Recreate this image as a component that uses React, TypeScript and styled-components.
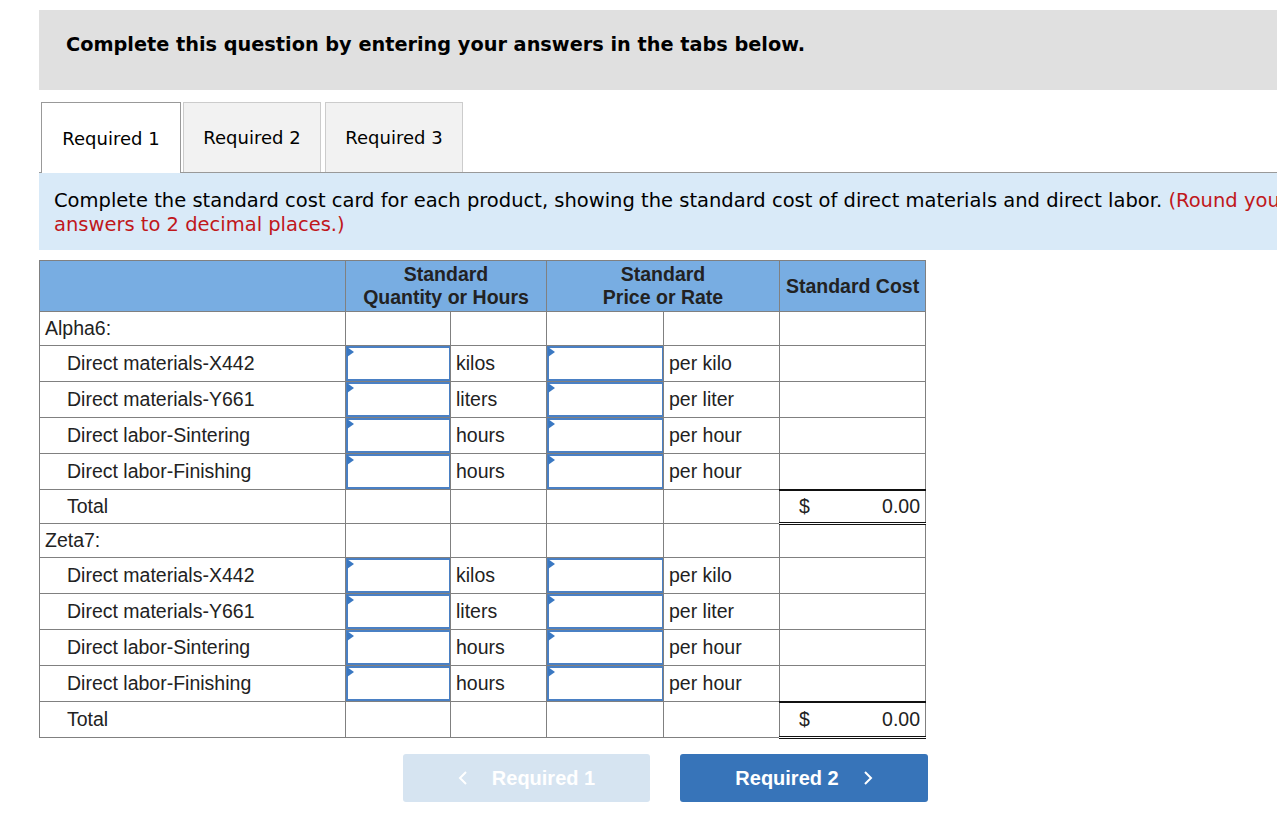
import { FC } from 'react';
import styled, { createGlobalStyle } from 'styled-components';

const GlobalStyle = createGlobalStyle`
  body {
    margin: 0;
    background: #ffffff;
    font-family: "DejaVu Sans", Verdana, sans-serif;
    color: #000;
  }
`;

const Page = styled.div`
  padding: 10px 0 0 39px;
  width: 1238px;
`;

const Banner = styled.div`
  display: flex;
  align-items: center;
  height: 80px;
  padding-left: 27px;
  padding-bottom: 12px;
  box-sizing: border-box;
  background: #e0e0e0;
  font-size: 19.3px;
  font-weight: bold;
  white-space: nowrap;
`;

const TabBar = styled.div`
  display: flex;
  margin-top: 12px;
  border-bottom: 1px solid #999;
  height: 70px;
`;

const Tab = styled.div<{ active?: boolean; w: number; ml: number }>`
  display: flex;
  align-items: center;
  justify-content: center;
  width: ${({ w }) => w}px;
  margin-left: ${({ ml }) => ml}px;
  box-sizing: border-box;
  font-size: 18px;
  background: ${({ active }) => (active ? '#ffffff' : '#f2f2f2')};
  border: 1px solid ${({ active }) => (active ? '#999' : '#ccc')};
  border-bottom: none;
  height: ${({ active }) => (active ? 71 : 70)}px;
  margin-bottom: ${({ active }) => (active ? -1 : 0)}px;
  position: relative;
  z-index: ${({ active }) => (active ? 1 : 0)};
`;

const Instruction = styled.div`
  background: #d9eaf8;
  height: 77px;
  box-sizing: border-box;
  padding: 16px 0 0 15px;
  font-size: 19.5px;
  line-height: 24px;
  overflow: hidden;
  white-space: nowrap;
`;

const Note = styled.span`
  color: #c0171b;
`;

const Grid = styled.table`
  margin-top: 10px;
  border-collapse: collapse;
  font-family: "Liberation Sans", Arial, sans-serif;
  font-size: 19.5px;
  color: #222;
  table-layout: fixed;
  width: 886px;
`;

const HeadCell = styled.th`
  background: #78ade2;
  border: 1px solid #808080;
  height: 50px;
  padding: 0 2px;
  font-weight: bold;
  font-size: 19.5px;
  line-height: 23px;
  color: #222;
`;

const Row = styled.tr<{ h: number }>`
  height: ${({ h }) => h}px;
`;

const Cell = styled.td<{ indent?: number }>`
  border: 1px solid #808080;
  padding: 0 0 0 ${({ indent }) => indent ?? 5}px;
  white-space: nowrap;
  overflow: hidden;
`;

const InputCell = styled.td`
  border: 1px solid #808080;
  padding: 0;
  position: relative;
`;

const AnswerBox = styled.div`
  height: 35px;
  box-sizing: border-box;
  border: 2px solid #4a80c4;
  border-right-width: 1px;
  background: #fff;
`;

const Flag = styled.span`
  position: absolute;
  left: 1px;
  top: 1px;
  width: 0;
  height: 0;
  border-top: 5px solid transparent;
  border-bottom: 5px solid transparent;
  border-left: 7px solid #3a78c2;
`;

const TotalCell = styled.td`
  border: 1px solid #808080;
  border-top: 2px solid #111;
  border-bottom: 3px double #111;
  padding: 0 5px 0 19px;
`;

const TotalInner = styled.div`
  display: flex;
  justify-content: space-between;
`;

const Nav = styled.div`
  display: flex;
  gap: 30px;
  margin: 15px 0 0 364px;
`;

const NavButton = styled.div<{ disabled?: boolean }>`
  display: flex;
  align-items: center;
  justify-content: center;
  gap: 23px;
  width: ${({ disabled }) => (disabled ? 247 : 248)}px;
  height: 48px;
  border-radius: 3px;
  background: ${({ disabled }) => (disabled ? '#d6e4f1' : '#3774b9')};
  color: #fff;
  font-family: "Liberation Sans", Arial, sans-serif;
  font-weight: bold;
  font-size: 20px;
`;

const Chevron: FC<{ dir: 'left' | 'right' }> = ({ dir }) => (
  <svg width="11" height="16" viewBox="0 0 11 16">
    <polyline
      points={dir === 'left' ? '8,2 2,8 8,14' : '3,2 9,8 3,14'}
      fill="none"
      stroke="#fff"
      strokeWidth="2"
    />
  </svg>
);

type Line = { label: string; unit: string; rate: string };

const lines: Line[] = [
  { label: 'Direct materials-X442', unit: 'kilos', rate: 'per kilo' },
  { label: 'Direct materials-Y661', unit: 'liters', rate: 'per liter' },
  { label: 'Direct labor-Sintering', unit: 'hours', rate: 'per hour' },
  { label: 'Direct labor-Finishing', unit: 'hours', rate: 'per hour' },
];

const Answer = () => (
  <InputCell>
    <AnswerBox />
    <Flag />
  </InputCell>
);

const Product: FC<{ name: string; totalH: number }> = ({ name, totalH }) => (
  <>
    <Row h={34}>
      <Cell>{name}</Cell>
      <Cell />
      <Cell />
      <Cell />
      <Cell />
      <Cell />
    </Row>
    {lines.map((l) => (
      <Row h={36} key={l.label}>
        <Cell indent={27}>{l.label}</Cell>
        <Answer />
        <Cell>{l.unit}</Cell>
        <Answer />
        <Cell>{l.rate}</Cell>
        <Cell />
      </Row>
    ))}
    <Row h={totalH}>
      <Cell indent={27}>Total</Cell>
      <Cell />
      <Cell />
      <Cell />
      <Cell />
      <TotalCell>
        <TotalInner>
          <span>$</span>
          <span>0.00</span>
        </TotalInner>
      </TotalCell>
    </Row>
  </>
);

const App = () => (
  <>
    <GlobalStyle />
    <Page>
      <Banner>Complete this question by entering your answers in the tabs below.</Banner>
      <TabBar>
        <Tab active w={140} ml={2}>Required 1</Tab>
        <Tab w={138} ml={2}>Required 2</Tab>
        <Tab w={138} ml={4}>Required 3</Tab>
      </TabBar>
      <Instruction>
        Complete the standard cost card for each product, showing the standard cost of direct materials and direct
        labor. <Note>(Round your</Note>
        <br />
        <Note>answers to 2 decimal places.)</Note>
      </Instruction>
      <Grid>
        <colgroup>
          <col style={{ width: 306 }} />
          <col style={{ width: 105 }} />
          <col style={{ width: 96 }} />
          <col style={{ width: 117 }} />
          <col style={{ width: 116 }} />
          <col style={{ width: 146 }} />
        </colgroup>
        <thead>
          <tr>
            <HeadCell />
            <HeadCell colSpan={2}>
              Standard
              <br />
              Quantity or Hours
            </HeadCell>
            <HeadCell colSpan={2}>
              Standard
              <br />
              Price or Rate
            </HeadCell>
            <HeadCell>Standard Cost</HeadCell>
          </tr>
        </thead>
        <tbody>
          <Product name="Alpha6:" totalH={34} />
          <Product name="Zeta7:" totalH={36} />
        </tbody>
      </Grid>
      <Nav>
        <NavButton disabled>
          <Chevron dir="left" />
          Required 1
        </NavButton>
        <NavButton>
          Required 2
          <Chevron dir="right" />
        </NavButton>
      </Nav>
    </Page>
  </>
);

export default App;
